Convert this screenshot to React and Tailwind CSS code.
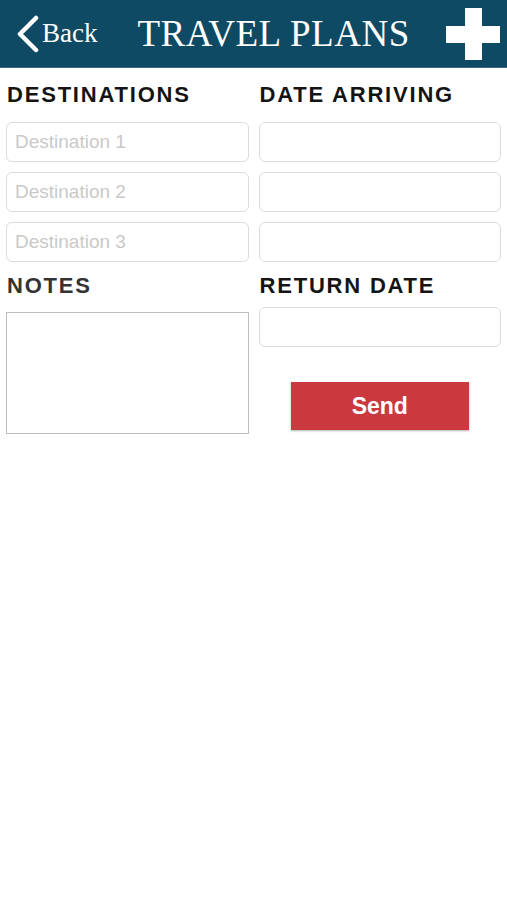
import React from 'react';

const label = "h-[32px] flex items-center pl-[1px] text-[22px] font-bold tracking-[1.8px] leading-none [font-family:'Liberation_Sans',Arial,sans-serif]";
const field =
  "block w-full h-[40px] rounded-[6px] border border-[#dcdcdc] bg-white px-[8px] text-[19px] text-[#333] outline-none placeholder:text-[#c9c9c9] [font-family:'Liberation_Sans',Arial,sans-serif]";

function Header() {
  return (
    <div className="flex h-[68px] items-center bg-[#0e4a64] border-b border-[#3d6c82] pl-[16px] pr-[7px] text-white [font-family:'Liberation_Serif','Times_New_Roman',serif]">
      <div className="flex items-center">
        <svg width="24" height="38" viewBox="0 0 24 38" className="mt-[1px]">
          <path d="M20 3 L4 19 L20 35" fill="none" stroke="white" strokeWidth="4.5" strokeLinecap="round" strokeLinejoin="round" />
        </svg>
        <span className="ml-[2px] text-[27px] leading-none">Back</span>
      </div>
      <div className="ml-[40px] text-[37px] leading-none tracking-[0.5px]">TRAVEL PLANS</div>
      <svg width="54" height="52" viewBox="0 0 54 52" className="ml-auto mt-[1px]">
        <rect x="19" y="0" width="17" height="52" fill="white" />
        <rect x="0" y="18" width="54" height="17" fill="white" />
      </svg>
    </div>
  );
}

export default function App() {
  return (
    <div className="min-h-[900px] bg-white">
      <Header />
      <div className="grid grid-cols-2 gap-x-[10px] px-[6px] pt-[11px]">
        <div>
          <div className={label + ' text-[#141414]'}>DESTINATIONS</div>
          <div className="mt-[11px] flex flex-col gap-[10px]">
            <input className={field} placeholder="Destination 1" />
            <input className={field} placeholder="Destination 2" />
            <input className={field} placeholder="Destination 3" />
          </div>
        </div>
        <div>
          <div className={label + ' text-[#141414]'}>DATE ARRIVING</div>
          <div className="mt-[11px] flex flex-col gap-[10px]">
            <input className={field} />
            <input className={field} />
            <input className={field} />
          </div>
        </div>
      </div>
      <div className="grid grid-cols-2 gap-x-[10px] px-[6px] pt-[8px]">
        <div>
          <div className={label + ' text-[#333333]'}>NOTES</div>
          <textarea className="mt-[10px] block h-[122px] w-full resize-none border-[1.5px] border-[#bdbdbd] bg-white outline-none" />
        </div>
        <div>
          <div className={label + ' text-[#141414]'}>RETURN DATE</div>
          <input className={field + ' mt-[5px]'} />
          <div className="mt-[35px] flex justify-center">
            <button className="h-[48px] w-[178px] bg-[#c9393e] text-[23px] font-bold text-white shadow-[0_1px_2px_rgba(0,0,0,0.3)] [font-family:'Liberation_Sans',Arial,sans-serif]">
              Send
            </button>
          </div>
        </div>
      </div>
    </div>
  );
}
